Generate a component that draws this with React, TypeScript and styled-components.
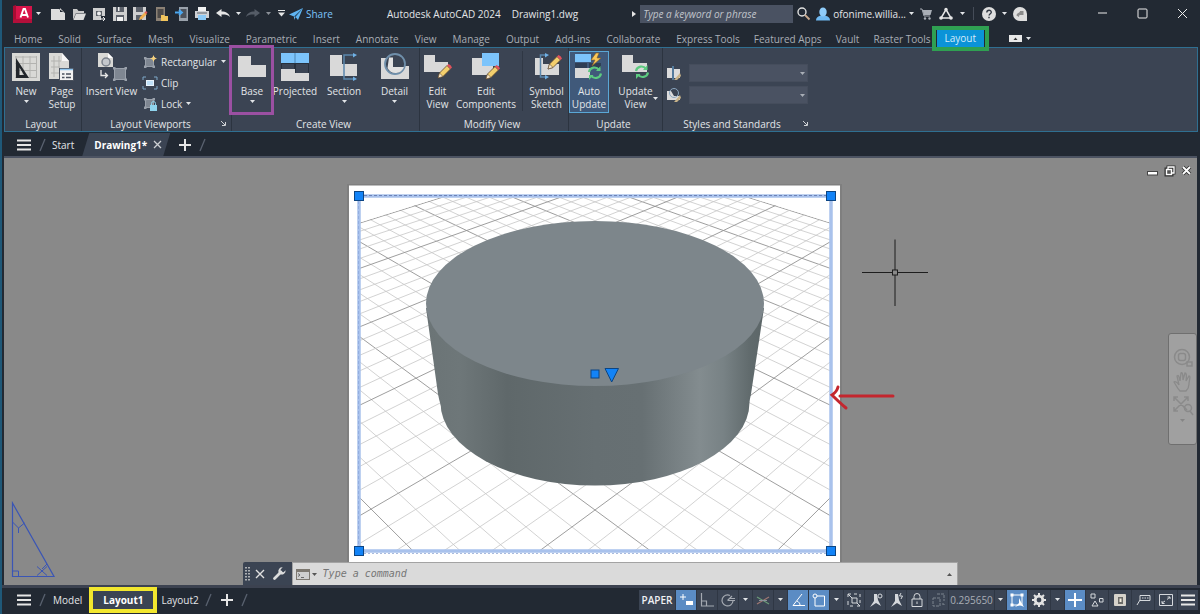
import React from "react";
import styled, { createGlobalStyle, css } from "styled-components";

const c = {
  chrome: "#222933",
  panel: "#3b4453",
  field: "#4a5262",
  line: "#2f6f91",
  text: "#e2e5e8",
  muted: "#a9aeb6",
  icon: "#dcdcdc",
  sky: "#7cc4fb",
  active: "#5b8cc4",
};

const Global = createGlobalStyle`
  *, *::before, *::after { box-sizing: border-box; }
  body { margin: 0; background: ${c.chrome}; }
  body, button, input, select {
    font-family: "Open Sans", "Noto Sans", "Segoe UI", sans-serif;
    font-size: 10px;
    line-height: 14px;
  }
  button { margin: 0; padding: 0; border: 0; background: none; color: inherit; }
  a { color: inherit; text-decoration: none; }
`;

const Window = styled.div`
  display: flex;
  flex-direction: column;
  min-height: 100vh;
  overflow: hidden;
  border-left: 2px solid #1f5878;
  background: ${c.chrome};
  color: ${c.text};
`;

const Svg = styled.svg<{ $w: number; $h?: number }>`
  display: block;
  flex: none;
  width: ${(p) => p.$w}px;
  height: ${(p) => p.$h ?? p.$w}px;
  overflow: visible;
`;

/* ---------- small shared glyphs ---------- */

const Caret = ({ color = c.text }: { color?: string }) => (
  <Svg $w={5} $h={3} viewBox="0 0 5 3" aria-hidden="true">
    <path d="M0 0h5L2.500 3z" fill={color} />
  </Svg>
);

const Burger = () => (
  <Svg $w={14} $h={12} viewBox="0 0 14 12" aria-hidden="true">
    <path d="M0 1.500h14M0 6h14M0 10.500h14" stroke="#e6e6e6" strokeWidth="2" />
  </Svg>
);

const Plus = () => (
  <Svg $w={12} viewBox="0 0 12 12" aria-hidden="true">
    <path d="M6 0v12M0 6h12" stroke="#e6e6e6" strokeWidth="2" />
  </Svg>
);

const Slash = () => (
  <Svg $w={5} $h={12} viewBox="0 0 5 12" aria-hidden="true">
    <path d="M0 12L5 0" stroke="#59616f" strokeWidth="1.300" />
  </Svg>
);

/* ---------- title bar ---------- */

const TitleBar = styled.header`
  display: flex;
  align-items: center;
  height: 27px;
  padding: 0 12px 0 11px;
`;

const AppButton = styled.button`
  display: flex;
  align-items: center;
  gap: 3px;
  width: 35px;
`;

const QuickAccess = styled.div`
  display: grid;
  grid-template-columns: repeat(9, 1fr);
  justify-items: center;
  width: 185px;
`;

const IconButton = styled.button<{ $w?: number }>`
  display: flex;
  align-items: center;
  justify-content: center;
  width: ${(p) => (p.$w ? `${p.$w}px` : "auto")};
  flex: none;
`;

const ShareLink = styled.a`
  display: flex;
  align-items: center;
  gap: 3px;
  color: ${c.sky};
`;

const Title = styled.h1`
  display: flex;
  flex: 1;
  justify-content: center;
  gap: 11px;
  margin: 0;
  font-size: 10px;
  font-weight: 400;
  line-height: 14px;
  white-space: nowrap;
`;

const SearchInput = styled.input`
  width: 153px;
  height: 18px;
  margin-left: 4px;
  padding: 0 3px;
  border: 0;
  border-radius: 0;
  background: ${c.field};
  color: ${c.text};
  &::placeholder {
    color: #c0c4ca;
    font-style: italic;
    opacity: 1;
  }
`;

const Account = styled.button`
  display: flex;
  align-items: center;
  gap: 3px;
  margin-left: 3px;
  white-space: nowrap;
`;

const AccountTools = styled.div`
  display: flex;
  align-items: center;
  gap: 6px;
  margin-left: 6px;
`;

const Rule = styled.span`
  width: 1px;
  height: 13px;
  margin: 0 2px;
  background: #454c58;
`;

const WindowControls = styled.div`
  display: flex;
  align-items: center;
  gap: 29px;
  margin-left: 70px;
`;

const Logo = () => (
  <Svg $w={20} $h={18} viewBox="0 0 20 18" aria-hidden="true">
    <path d="M0 1h19v17H0z" fill="#d8144a" />
    <path d="M0 1l3-1v17l-3 1z" fill="#a80c33" />
    <path d="M0 15l3-1h16v4H0z" fill="#b30f3a" />
    <path d="M7.500 12.500L10.500 4h1.500l3 8.500M8.600 10h5.400" fill="none" stroke="#fff" strokeWidth="1.900" />
  </Svg>
);

const quick: Record<string, React.ReactNode> = {
  New: <path d="M0 2h8l6 4v7H0zM9 1v4h4z" fill={c.icon} />,
  Open: (
    <>
      <path d="M1 13V2h4l1.500 2H12v2H4z" fill="#c9c9c9" />
      <path d="M4 6.500h10L11.500 13H1.500z" fill={c.icon} />
    </>
  ),
  "Open from Web": (
    <>
      <path d="M1 1h12v8H9v4H1z" fill="#cfcfcf" />
      <path d="M4 4h6v5H4z" fill="#5a5f66" />
      <circle cx="7" cy="6.500" r="2" fill="#eee" />
      <path d="M8 12h5M11 10l2 2-2 2" stroke="#eee" fill="none" />
    </>
  ),
  Save: (
    <>
      <path d="M0 0h14v14H0z" fill="#cfcfcf" />
      <path d="M3 0h8v5H3zM3 8h8v6H3z" fill="#5b6069" />
      <path d="M5 0h1.500v4H5zM4 10h6v4H4z" fill="#f2f2f2" />
    </>
  ),
  "Save As": (
    <>
      <path d="M0 0h13v13H0z" fill="#cfcfcf" />
      <path d="M3 0h7v5H3zM3 8h6v5H3z" fill="#5b6069" />
      <path d="M6 13l1-3 5-5 2 2-5 5z" fill="#f0b050" />
      <path d="M11.500 5.500L13 4l1.500 1.500L13 7z" fill="#e25b5b" />
    </>
  ),
  "Open from Mobile": (
    <>
      <path d="M2 0h9v14H2z" fill="#8b8175" />
      <path d="M3.500 2h6v9h-6z" fill="#4d4a48" />
      <path d="M7 8h3l1 1h3v5H7z" fill="#f2c55c" />
    </>
  ),
  "Save to Mobile": (
    <>
      <path d="M4 0h9v14H4z" fill="#9aa2ab" />
      <path d="M5.500 2h6v9h-6z" fill="#4d535c" />
      <path d="M0 5.500h6M4 3l3 2.500L4 8" fill="none" stroke="#4ba8f0" strokeWidth="1.800" />
    </>
  ),
  Plot: (
    <>
      <path d="M3 0h8v4H3z" fill="#f2f2f2" />
      <path d="M0 4h14v7H0z" fill="#cfd2d6" />
      <path d="M3 8h8v5H3z" fill="#8ccaf7" />
      <path d="M2 6h10" stroke="#5b6069" />
    </>
  ),
  Undo: (
    <path d="M0 6l5.500-4v2.600C10 4.600 13 6.500 14 10c-2-2.200-4.500-2.600-8.500-2.500V10z" fill="#e6e6e6" />
  ),
};

const TitleSection = () => (
  <TitleBar>
    <AppButton type="button" aria-label="Application menu">
      <Logo />
      <Caret />
    </AppButton>
    <QuickAccess>
      {Object.entries(quick).map(([name, glyph]) => (
        <IconButton type="button" key={name} aria-label={name}>
          <Svg $w={14} viewBox="0 0 14 14" aria-hidden="true">
            {glyph}
          </Svg>
        </IconButton>
      ))}
    </QuickAccess>
    <IconButton type="button" $w={10} aria-label="Undo history">
      <Caret />
    </IconButton>
    <IconButton type="button" $w={20} aria-label="Redo">
      <Svg $w={14} viewBox="0 0 14 14" aria-hidden="true">
        <path d="M14 6L8.500 2v2.600C4 4.600 1 6.500 0 10c2-2.200 4.500-2.600 8.500-2.500V10z" fill="#555c67" />
      </Svg>
    </IconButton>
    <IconButton type="button" $w={10} aria-label="Redo history">
      <Caret color="#8b9098" />
    </IconButton>
    <IconButton type="button" $w={16} aria-label="Customize Quick Access Toolbar">
      <Svg $w={7} $h={7} viewBox="0 0 7 7" aria-hidden="true">
        <path d="M0 .5h7" stroke="#e6e6e6" />
        <path d="M0 2.500h7L3.500 6.500z" fill="#e6e6e6" />
      </Svg>
    </IconButton>
    <ShareLink href="#share">
      <Svg $w={14} viewBox="0 0 14 14" aria-hidden="true">
        <path d="M0 7.500L14 1 9 13 6.500 10 5 13V9.500z" fill="#5fb4f2" />
        <path d="M5 9.500L14 1 6.500 10z" fill="#2a4a66" />
      </Svg>
      Share
    </ShareLink>
    <Title>
      <span>Autodesk AutoCAD 2024</span>
      <span>Drawing1.dwg</span>
    </Title>
    <Svg $w={4} $h={6} viewBox="0 0 4 6" aria-hidden="true">
      <path d="M0 0l4 3-4 3z" fill="#e6e6e6" />
    </Svg>
    <SearchInput aria-label="Search" placeholder="Type a keyword or phrase" />
    <IconButton type="button" $w={20} aria-label="Run search">
      <Svg $w={13} viewBox="0 0 13 13" aria-hidden="true">
        <circle cx="5" cy="5" r="4" fill="none" stroke="#e0e0e0" strokeWidth="1.400" />
        <path d="M8 8l4.500 4.500" stroke="#c9a98d" strokeWidth="1.800" />
      </Svg>
    </IconButton>
    <Account type="button">
      <Svg $w={14} viewBox="0 0 14 14" aria-hidden="true">
        <path d="M0 13.500c0-3 2-4 4.500-4.700h5C12 9.500 14 10.500 14 13.500z" fill="#6fb9f2" />
        <ellipse cx="7" cy="5" rx="3.700" ry="4.600" fill="#8fccfa" />
      </Svg>
      ofonime.willia...
      <Caret />
    </Account>
    <AccountTools>
      <IconButton type="button" aria-label="App Store">
        <Svg $w={12} viewBox="0 0 12 12" aria-hidden="true">
          <path d="M0 1h2l2 7h6" fill="none" stroke={c.muted} />
          <path d="M2.500 2H12l-1.500 5H4z" fill={c.muted} />
          <circle cx="5" cy="10.500" r="1.200" fill={c.muted} />
          <circle cx="9.500" cy="10.500" r="1.200" fill={c.muted} />
        </Svg>
      </IconButton>
      <IconButton type="button" $w={16} aria-label="Autodesk App">
        <Svg $w={14} viewBox="0 0 14 14" aria-hidden="true">
          <path d="M7 2.500L12 11H2z" fill="none" stroke="#e6e6e6" strokeWidth="1.500" />
          <circle cx="7" cy="2.500" r="1.700" fill="#e6e6e6" />
          <circle cx="12" cy="11" r="1.800" fill="#e6e6e6" />
          <circle cx="2" cy="11" r="1.800" fill="#e6e6e6" />
        </Svg>
      </IconButton>
      <Caret />
      <Rule />
      <IconButton type="button" aria-label="Help">
        <Svg $w={14} viewBox="0 0 14 14" aria-hidden="true">
          <circle cx="7" cy="7" r="7" fill="#dedede" />
          <path d="M4.800 5.500c0-3 4.500-3 4.500-.3 0 1.600-2.200 1.600-2.200 3.400M7 9.800v1.500" fill="none" stroke="#333a45" strokeWidth="1.400" />
        </Svg>
      </IconButton>
      <Caret />
      <IconButton type="button" aria-label="Assistant">
        <Svg $w={14} viewBox="0 0 14 14" aria-hidden="true">
          <path d="M7 0a7 7 0 0 1 7 7v7H7A7 7 0 0 1 7 0z" fill="#dedede" />
          <path d="M3.500 8.500c0-2.500 3.500-2.500 3.500-4.500h3.500v4H7c-1 0-1 1.500-1 2z" fill="#8b8b8b" />
        </Svg>
      </IconButton>
    </AccountTools>
    <WindowControls>
      <IconButton type="button" aria-label="Minimize">
        <Svg $w={11} viewBox="0 0 11 11" aria-hidden="true">
          <path d="M1 5h9" stroke="#ececec" />
        </Svg>
      </IconButton>
      <IconButton type="button" aria-label="Maximize">
        <Svg $w={11} viewBox="0 0 11 11" aria-hidden="true">
          <rect x="1" y="1" width="9" height="9" rx="1" fill="none" stroke="#ececec" />
        </Svg>
      </IconButton>
      <IconButton type="button" aria-label="Close">
        <Svg $w={11} viewBox="0 0 11 11" aria-hidden="true">
          <path d="M1 1l9 9M10 1l-9 9" stroke="#ececec" />
        </Svg>
      </IconButton>
    </WindowControls>
  </TitleBar>
);

/* ---------- ribbon tabs ---------- */

const TabStrip = styled.nav`
  display: flex;
  align-items: center;
  gap: 16px;
  height: 20px;
  padding: 3px 0 0 12px;
  color: ${c.muted};
  white-space: nowrap;
`;

const AddOnTabs = styled.div`
  display: flex;
  align-items: center;
  gap: 14px;
`;

const RibbonTab = styled.a<{ $active?: boolean }>`
  position: relative;
  ${(p) =>
    p.$active &&
    css`
      height: 17px;
      margin: 0 -8px;
      padding: 1px 8px 0;
      background: #0b93d8;
      color: #d6ecfa;
    `}
`;

const Marker = styled.span<{ $color: string; $inset: string; $w?: number }>`
  position: absolute;
  z-index: 2;
  inset: ${(p) => p.$inset};
  border: ${(p) => p.$w ?? 4}px solid ${(p) => p.$color};
  pointer-events: none;
`;

const RibbonToggle = styled.button`
  display: flex;
  align-items: center;
  gap: 4px;
  margin-left: 19px;
`;

const tabs = [
  "Home", "Solid", "Surface", "Mesh", "Visualize", "Parametric", "Insert", "Annotate", "View",
  "Manage", "Output", "Add-ins", "Collaborate",
];

const addOnTabs = ["Express Tools", "Featured Apps", "Vault", "Raster Tools"];

const Tabs = () => (
  <TabStrip>
    {tabs.map((t) => (
      <RibbonTab key={t} href="#ribbon">
        {t}
      </RibbonTab>
    ))}
    <AddOnTabs>
      {addOnTabs.map((t) => (
        <RibbonTab key={t} href="#ribbon">
          {t}
        </RibbonTab>
      ))}
      <RibbonTab href="#ribbon" $active>
        Layout
        <Marker $color="#2fa052" $inset="-4px -5px" />
      </RibbonTab>
      <RibbonToggle type="button" aria-label="Minimize ribbon">
        <Svg $w={13} $h={7} viewBox="0 0 13 7" aria-hidden="true">
          <rect width="13" height="7" fill="#e8e8e8" />
          <path d="M4.500 5l2-2.500 2 2.500z" fill="#333" />
        </Svg>
        <Caret />
      </RibbonToggle>
    </AddOnTabs>
  </TabStrip>
);

/* ---------- ribbon ---------- */

const RibbonBar = styled.section`
  display: flex;
  height: 85px;
  margin: 0 2px;
  border: 1px solid ${c.line};
  background: ${c.panel};
`;

const PanelBox = styled.div<{ $last?: boolean }>`
  display: flex;
  flex-direction: column;
  flex: none;
  border-right: ${(p) => (p.$last ? 0 : 1)}px solid #2c3440;
`;

const PanelBody = styled.div`
  display: flex;
  align-items: flex-start;
  flex: 1;
  padding-top: 3px;
`;

const PanelFoot = styled.div`
  display: flex;
  align-items: center;
  height: 15px;
  padding-right: 4px;
`;

const PanelName = styled.span`
  flex: 1;
  text-align: center;
`;

const Launcher = () => (
  <IconButton type="button" $w={8} aria-label="Panel settings">
    <Svg $w={5} viewBox="0 0 5 5" aria-hidden="true">
      <path d="M0 0l4 4M4.500 1v3.500H1" fill="none" stroke="#cfd2d6" />
    </Svg>
  </IconButton>
);

const Tool = styled.button<{ $w: number; $active?: boolean }>`
  position: relative;
  display: flex;
  flex-direction: column;
  align-items: center;
  flex: none;
  width: ${(p) => p.$w}px;
  height: 62px;
  padding-top: 1px;
  border: 1px solid ${(p) => (p.$active ? "#5aa7d6" : "transparent")};
  background: ${(p) => (p.$active ? "#40597a" : "transparent")};
  line-height: 13px;
  white-space: nowrap;
`;

const ToolText = styled.span`
  margin: 4px 0 2px;
`;

const SideCaret = styled.span`
  position: absolute;
  right: 3px;
  bottom: 12px;
`;

const ToolColumn = styled.div`
  display: flex;
  flex-direction: column;
  width: 90px;
  padding: 0 6px 0 2px;
`;

const ToolRow = styled.div`
  display: flex;
  align-items: center;
  height: 21px;
`;

const ToolRowButton = styled.button<{ $wide?: boolean }>`
  display: flex;
  align-items: center;
  justify-content: space-between;
  flex: ${(p) => (p.$wide ? 1 : "none")};
  gap: 4px;
`;

const ToolDivider = styled.span`
  width: 1px;
  height: 60px;
  margin: 0 2px 0 5px;
  background: #2f3744;
`;

const StyleRows = styled.div`
  display: grid;
  grid-template-columns: 14px 119px;
  gap: 4px 8px;
  align-items: center;
  padding: 13px 5px 0 4px;
`;

const SelectWrap = styled.label`
  position: relative;
  display: block;
  height: 18px;
`;

const StyleSelect = styled.select`
  display: block;
  width: 100%;
  height: 18px;
  border: 1px solid #454d5c;
  border-radius: 0;
  background: ${c.field};
  color: ${c.text};
  appearance: none;
`;

const SelectCaret = styled.span`
  position: absolute;
  top: 8px;
  right: 3px;
  pointer-events: none;
`;

const Pencil = ({ x, y }: { x: number; y: number }) => (
  <g transform={`translate(${x} ${y})`}>
    <path d="M0 14l1.500-5L9 1.500l3.500 3.500L5 12.500z" fill="#f3cf6d" stroke="#5b4630" strokeWidth=".8" />
    <path d="M0 14l1.500-5L5 12.500z" fill="#fbe9c8" stroke="#5b4630" strokeWidth=".6" />
    <path d="M9 1.500L10.500 0Q13 .5 14 3.500L12.500 5z" fill="#e0525c" />
  </g>
);

const Refresh = ({ x, y }: { x: number; y: number }) => (
  <g transform={`translate(${x} ${y})`} fill="none" stroke="#5ccb80" strokeWidth="2.200">
    <path d="M1 6a5.500 5.500 0 0 1 10-2M13 7.500a5.500 5.500 0 0 1-10 2" />
    <path d="M12.500 0v5H8zM1 14V9h4.500z" fill="#5ccb80" stroke="none" />
  </g>
);

const VpBox = ({ x, y, s }: { x: number; y: number; s: number }) => (
  <g transform={`translate(${x} ${y})`} stroke="#9aa1ab" fill="#9aa1ab">
    <rect x="1.500" y="1.500" width={s - 3} height={s - 3} fill="#7f8792" />
    <path d={`M0 0h2.500v2.500H0zM${s - 2.500} 0h2.500v2.500h-2.500zM0 ${s - 2.500}h2.500v2.500H0zM${s - 2.500} ${s - 2.500}h2.500v2.500h-2.500z`} stroke="none" />
  </g>
);

const art: Record<string, React.ReactNode> = {
  new: (
    <>
      <rect width="28" height="28" fill="#d9d9d6" />
      <path d="M3 4h22M3 10.500h22M3 17.500h22M3 24.500h22M4 3v22M11 3v22M18 3v22M24.500 3v22" stroke="#b3b3b0" />
      <path d="M4 5v20h13zM7.500 14.500l4.500 7.500H7.500z" fill="#22262b" fillRule="evenodd" />
    </>
  ),
  page: (
    <>
      <path d="M1 0h13l7 8v18H1z" fill="#d9d9d6" />
      <path d="M14 0v8h7z" fill="#f7f7f7" />
      <path d="M3 8h10M3 14h9M3 20h8M6 3v21M11 3v12" stroke="#b3b3b0" />
      <rect x="11.500" y="15.500" width="14" height="12" fill="#f2f2f2" stroke="#4b525e" />
      <path d="M12 16.500h13" stroke="#8fc5ee" strokeWidth="1.500" />
      <path d="M14 21h2.500M14 24.500h2.500M18 21h5M18 24.500h5" stroke="#4b525e" strokeWidth="1.500" />
    </>
  ),
  insert: (
    <>
      <path d="M0 0h10l5 5v9H0z" fill="#d9d9d6" />
      <path d="M10 0v5h5z" fill="#fff" />
      <circle cx="8" cy="9" r="4" fill="#c3c7cc" stroke="#7b828c" strokeWidth="1.500" />
      <path d="M3 17v5.500h6M7 20l2.500 2.500L7 25" fill="none" stroke="#e6e6e6" strokeWidth="1.300" />
      <VpBox x={15} y={14} s={14} />
    </>
  ),
  base: <path d="M0 3h13v9h15v12H0z" fill="#d9d9d9" />,
  projected: (
    <>
      <path d="M0 0h28v10H0z" fill="#7cc4fb" />
      <path d="M14 0v10" stroke="#4a86b5" />
      <path d="M.5 10.500h13v6H.5zM14.500 10.500h13v10h-13z" fill={c.panel} stroke="#27303c" />
      <path d="M0 16h14v4h14v8H0z" fill="#d9d9d9" />
    </>
  ),
  section: (
    <>
      <path d="M0 2h12v9h15v12H0z" fill="#d9d9d9" />
      <path d="M25 2H14v24h11" fill="none" stroke="#5b87ad" strokeWidth="1.500" />
      <path d="M23 0l4 2-4 2.500zM23 23.500l4 2.500-4 2z" fill="#6fb1e6" />
    </>
  ),
  detail: (
    <>
      <path d="M0 5h8v8h20v13H0z" fill="#d9d9d9" />
      <circle cx="14" cy="11" r="10" fill="#3b4453" stroke="#6f8faa" strokeWidth="1.800" />
      <path d="M8 4.500h4V14h11A9 9 0 0 1 6.500 15z" fill="#e2e2e2" />
    </>
  ),
  editView: (
    <>
      <path d="M0 2h11v7h13v4l-6 6H0z" fill="#d9d9d9" />
      <Pencil x={14} y={11} />
    </>
  ),
  editComp: (
    <>
      <path d="M0 5h13v8h8v9H0z" fill="#d9d9d9" />
      <rect x="10" y="0" width="17" height="13" fill="#7cc4fb" />
      <Pencil x={14} y={12} />
    </>
  ),
  symbol: (
    <>
      <path d="M2 5h8v6h16v11H2z" fill="#d9d9d9" />
      <path d="M13 2H7.500v22H13" fill="none" stroke="#5b87ad" strokeWidth="1.500" />
      <path d="M12 0l4 2-4 2.500zM12 22l4 2-4 2.500z" fill="#6fb1e6" />
      <Pencil x={15} y={2} />
    </>
  ),
  auto: (
    <>
      <path d="M0 1h16v8H0z" fill="#7cc4fb" />
      <path d="M0 10h12v5H0zM14 10h12v5H14z" fill="#2f3e54" />
      <path d="M0 15h15v10H0z" fill="#d9d9d9" />
      <path d="M21 0l-5 7h4l-3 6 9-8h-4l2-5z" fill="#fbc95a" stroke="#8a6120" strokeWidth=".6" />
      <Refresh x={13} y={13} />
    </>
  ),
  update: (
    <>
      <path d="M0 2h11v8h14v9H0z" fill="#d9d9d9" />
      <Refresh x={13} y={12} />
    </>
  ),
};

interface ToolProps {
  icon: string;
  lines: string[];
  w: number;
  menu?: boolean;
  sideMenu?: boolean;
  active?: boolean;
  children?: React.ReactNode;
}

const BigTool = ({ icon, lines, w, menu, sideMenu, active, children }: ToolProps) => (
  <Tool type="button" $w={w} $active={active}>
    <Svg $w={28} viewBox="0 0 28 28" aria-hidden="true">
      {art[icon]}
    </Svg>
    <ToolText>
      {lines.map((l, i) => (
        <React.Fragment key={l}>
          {i > 0 && <br />}
          {l}
        </React.Fragment>
      ))}
    </ToolText>
    {menu && <Caret />}
    {sideMenu && (
      <SideCaret>
        <Caret />
      </SideCaret>
    )}
    {children}
  </Tool>
);

interface PanelProps {
  name: string;
  launcher?: boolean;
  last?: boolean;
  children: React.ReactNode;
}

const Panel = ({ name, launcher, last, children }: PanelProps) => (
  <PanelBox $last={last}>
    <PanelBody>{children}</PanelBody>
    <PanelFoot>
      <PanelName>{name}</PanelName>
      {launcher && <Launcher />}
    </PanelFoot>
  </PanelBox>
);

const FirstTools = styled.div`
  display: flex;
  padding: 0 1px 0 3px;
`;

const Ribbon = () => (
  <RibbonBar id="ribbon">
    <Panel name="Layout">
      <FirstTools>
        <BigTool icon="new" lines={["New"]} w={36} menu />
        <BigTool icon="page" lines={["Page", "Setup"]} w={36} />
      </FirstTools>
    </Panel>
    <Panel name="Layout Viewports" launcher>
      <BigTool icon="insert" lines={["Insert View"]} w={59} />
      <ToolColumn>
        <ToolRow>
          <ToolRowButton type="button" $wide>
            <Svg $w={14} viewBox="0 0 14 14" aria-hidden="true">
              <VpBox x={1} y={2} s={11} />
              <path d="M10.500 0l1 2.500L14 3.500l-2.500 1-1 2.500-1-2.500L7 3.500l2.500-1z" fill="#f8d27a" />
            </Svg>
            Rectangular
            <Caret />
          </ToolRowButton>
        </ToolRow>
        <ToolRow>
          <ToolRowButton type="button">
            <Svg $w={14} viewBox="0 0 14 14" aria-hidden="true">
              <path d="M0 4V1h3M11 1h3v3M14 10v3h-3M3 13H0v-3" fill="none" stroke="#7fa8c9" />
              <rect x="3.500" y="4.500" width="7" height="5" fill="#bfe0f8" stroke="#e8f3fb" />
            </Svg>
            Clip
          </ToolRowButton>
        </ToolRow>
        <ToolRow>
          <ToolRowButton type="button">
            <Svg $w={14} viewBox="0 0 14 14" aria-hidden="true">
              <VpBox x={1} y={1} s={11} />
              <rect x="7" y="8" width="7" height="6" fill="#8fd4ee" />
              <path d="M8.500 8V6.500a2 2 0 0 1 4 0V8" fill="none" stroke="#8fd4ee" />
            </Svg>
            Lock
            <Caret />
          </ToolRowButton>
        </ToolRow>
      </ToolColumn>
    </Panel>
    <Panel name="Create View">
      <BigTool icon="base" lines={["Base"]} w={40} menu>
        <Marker $color="#9b50a2" $w={3} $inset="-7px -3px -3px -4px" />
      </BigTool>
      <BigTool icon="projected" lines={["Projected"]} w={46} />
      <BigTool icon="section" lines={["Section"]} w={52} menu />
      <BigTool icon="detail" lines={["Detail"]} w={49} menu />
    </Panel>
    <Panel name="Modify View">
      <BigTool icon="editView" lines={["Edit", "View"]} w={35} />
      <BigTool icon="editComp" lines={["Edit", "Components"]} w={62} />
      <ToolDivider />
      <BigTool icon="symbol" lines={["Symbol", "Sketch"]} w={43} />
    </Panel>
    <Panel name="Update">
      <BigTool icon="auto" lines={["Auto", "Update"]} w={40} active />
      <BigTool icon="update" lines={["Update", "View"]} w={53} sideMenu />
    </Panel>
    <Panel name="Styles and Standards" launcher last>
      <StyleRows>
        <Svg $w={14} viewBox="0 0 14 14" aria-hidden="true">
          <path d="M0 2h5v10H0zM7 3h6v9H7z" fill={c.icon} />
          <path d="M6 0v14" stroke="#6fb1e6" />
          <path d="M7 14l6-7 1 3-4 4z" fill="#c9b48a" />
        </Svg>
        <SelectWrap>
          <StyleSelect aria-label="Section view style" />
          <SelectCaret>
            <Caret color={c.muted} />
          </SelectCaret>
        </SelectWrap>
        <Svg $w={14} viewBox="0 0 14 14" aria-hidden="true">
          <path d="M0 3h4l3 5h6v4H0z" fill={c.icon} />
          <circle cx="7" cy="5" r="4.500" fill="none" stroke="#8aa6bf" />
          <path d="M7 14l6-7 1 3-4 4z" fill="#c9b48a" />
        </Svg>
        <SelectWrap>
          <StyleSelect aria-label="Detail view style" />
          <SelectCaret>
            <Caret color={c.muted} />
          </SelectCaret>
        </SelectWrap>
      </StyleRows>
    </Panel>
  </RibbonBar>
);

/* ---------- document tabs ---------- */

const DocTabs = styled.nav`
  display: flex;
  align-items: center;
  height: 24px;
  padding: 1px 0 0 15px;
`;

const DocLink = styled.a`
  margin: 0 6px 0 7px;
`;

const ActiveDoc = styled.div`
  display: flex;
  align-items: center;
  gap: 7px;
  height: 23px;
  margin-left: 2px;
  padding: 0 9px 0 12px;
  background: ${c.panel};
  clip-path: polygon(7px 0, 100% 0, calc(100% - 7px) 100%, 0 100%);
  color: #fff;
  font-weight: 700;
`;

const Spaced = styled.span<{ $l: number; $r: number }>`
  display: flex;
  align-items: center;
  margin: 0 ${(p) => p.$r}px 0 ${(p) => p.$l}px;
`;

const Documents = () => (
  <DocTabs aria-label="Documents">
    <IconButton type="button" aria-label="File menu">
      <Burger />
    </IconButton>
    <Spaced $l={9} $r={0}>
      <Slash />
    </Spaced>
    <DocLink href="#start">Start</DocLink>
    <ActiveDoc>
      Drawing1*
      <IconButton type="button" aria-label="Close drawing">
        <Svg $w={7} viewBox="0 0 7 7" aria-hidden="true">
          <path d="M0 0l7 7M7 0L0 7" stroke="#cdd0d4" strokeWidth="1.300" />
        </Svg>
      </IconButton>
    </ActiveDoc>
    <Spaced $l={9} $r={9}>
      <IconButton type="button" aria-label="New drawing">
        <Plus />
      </IconButton>
    </Spaced>
    <Slash />
  </DocTabs>
);

/* ---------- drawing canvas ---------- */

const Canvas = styled.main`
  position: relative;
  display: flex;
  flex: 1;
  justify-content: center;
  min-height: 400px;
  margin: 0 3px 0 2px;
  padding: 27px 12px 0 0;
  border-top: 2px solid #4c5362;
  overflow: hidden;
  background: #898989;
`;

const Sheet = styled.svg`
  display: block;
  flex: none;
  width: 491px;
  height: 390px;
  margin-bottom: -30px;
  overflow: visible;
`;

/* Perspective grid: lines fan out from a vanishing point; every fifth is a major line. */
const VP = { x: -255, y: -116 };
const gridLines = Array.from({ length: 33 }, (_, i) => {
  const k = i / 5;
  const y = (15.03 * k + 223) / (1 - 0.1127 * k);
  return { y, major: i % 5 === 0 };
});

const GridFan = () => (
  <>
    {gridLines.map((l) => (
      <line
        key={l.y}
        x1={VP.x}
        y1={VP.y}
        x2={830}
        y2={l.y}
        stroke={l.major ? "#939393" : "#c6c6c6"}
        strokeWidth={l.major ? 0.9 : 0.8}
      />
    ))}
  </>
);

const Grip = ({ x, y, s = 9 }: { x: number; y: number; s?: number }) => (
  <rect x={x - s / 2} y={y - s / 2} width={s} height={s} fill="#1283f7" stroke="#0c4583" />
);

const Drawing = () => (
  <Sheet viewBox="349 185 491 390" role="img" aria-label="Cylinder in a layout viewport">
    <defs>
      <clipPath id="viewport">
        <path d="M360 550V222.500L440 197.500H750L830 222.500V550z" />
      </clipPath>
      <linearGradient id="side" gradientUnits="userSpaceOnUse" x1="426" y1="0" x2="764" y2="0">
        <stop offset="0" stopColor="#6b7476" />
        <stop offset=".1" stopColor="#6e7779" />
        <stop offset=".24" stopColor="#5f686a" />
        <stop offset=".5" stopColor="#666f72" />
        <stop offset=".64" stopColor="#677073" />
        <stop offset=".81" stopColor="#838c8f" />
        <stop offset=".88" stopColor="#788285" />
        <stop offset=".96" stopColor="#606a6c" />
        <stop offset="1" stopColor="#5c6668" />
      </linearGradient>
    </defs>
    <rect x="347" y="184" width="495" height="400" fill="#7f7f7f" />
    <rect x="349" y="185.500" width="491" height="400" fill="#fff" />
    <g clipPath="url(#viewport)">
      <GridFan />
      <g transform="translate(1190 0) scale(-1 1)">
        <GridFan />
      </g>
    </g>
    <path d="M426 308L438 394Q439 400 441 406A154.500 83 0 0 0 748 406Q750 400 751 394L764 308z" fill="url(#side)" />
    <ellipse cx="595" cy="402.500" rx="154.500" ry="83" fill="url(#side)" />
    <ellipse cx="595" cy="303.500" rx="169" ry="82.500" fill="#7d868b" />
    <rect x="359" y="196" width="472" height="355" fill="none" stroke="#a9c2ec" strokeWidth="3.500" />
    <path d="M364 195.500h462" stroke="#6c83b8" strokeDasharray="3 2" />
    <path d="M364 553.500h462" stroke="#a9bbdf" strokeDasharray="2 2" />
    <path d="M358.500 201v345" stroke="#93aee0" strokeDasharray="3 2" />
    <Grip x={359} y={196} />
    <Grip x={831} y={196} />
    <Grip x={359} y={551} />
    <Grip x={831} y={551} />
    <Grip x={595} y={374} s={8} />
    <path d="M605 368.500h13.500L611.700 382z" fill="#1283f7" stroke="#0c4583" />
    <g fill="none" stroke="#c4262e" strokeWidth="3" strokeLinecap="round">
      <path d="M840 396h53" />
      <path d="M838 387c-1 4-3 6-6 8 4 4 8 8 14 13" />
    </g>
    <g fill="none" stroke="#1d1d1d">
      <path d="M862 272.500h30.500M897.500 272.500H928M895 239.500V270M895 275v31" />
      <rect x="892.500" y="270" width="5" height="5" />
    </g>
  </Sheet>
);

const SheetControls = styled.div`
  position: absolute;
  top: 7px;
  right: 6px;
  display: flex;
  gap: 7px;
`;

const UcsIcon = styled(Svg)`
  position: absolute;
  left: 7px;
  bottom: 8px;
`;

const NavBar = styled.div`
  position: absolute;
  top: 175px;
  right: 0;
  display: flex;
  flex-direction: column;
  align-items: center;
  gap: 3px;
  width: 29px;
  height: 112px;
  padding-top: 14px;
  border: 1px solid #6f6f6f;
  border-radius: 3px;
  background: #a0a0a0;
  color: #8a8a8a;
`;

const CommandBar = styled.form`
  position: absolute;
  left: 20%;
  right: 20%;
  bottom: 0;
  display: flex;
  height: 23px;
`;

const CommandTools = styled.div`
  display: flex;
  align-items: center;
  gap: 6px;
  width: 49px;
  padding-left: 2px;
  background: ${c.panel};
  border-radius: 2px 0 0 0;
`;

const CommandField = styled.label`
  display: flex;
  flex: 1;
  align-items: center;
  padding: 0 5px 0 3px;
  border: 1px solid #a3a3a3;
  border-bottom: 0;
  background: #dadada;
`;

const CommandInput = styled.input`
  flex: 1;
  min-width: 0;
  padding: 0 0 0 6px;
  border: 0;
  background: transparent;
  color: #333;
  font-family: "DejaVu Sans Mono", "Liberation Mono", monospace;
  &::placeholder {
    color: #767676;
    font-style: italic;
    opacity: 1;
  }
`;

const Workspace = () => (
  <Canvas>
    <Drawing />
    <SheetControls>
      <IconButton type="button" aria-label="Minimize drawing">
        <Svg $w={11} viewBox="0 0 11 11" aria-hidden="true">
          <rect x=".5" y="6.500" width="10" height="3.500" fill="#fff" stroke="#444" />
        </Svg>
      </IconButton>
      <IconButton type="button" aria-label="Restore drawing">
        <Svg $w={10} viewBox="0 0 10 10" aria-hidden="true">
          <path d="M3 3V1h6v6H7" fill="none" stroke="#333" strokeWidth="3" />
          <rect x="1" y="3" width="6" height="6" fill="#333" stroke="#333" strokeWidth="3" />
          <path d="M3 3V1h6v6H7" fill="none" stroke="#fff" strokeWidth="1.300" />
          <rect x="1.500" y="3.500" width="5" height="5" fill="#555" stroke="#fff" strokeWidth="1.400" />
        </Svg>
      </IconButton>
      <IconButton type="button" aria-label="Close drawing window">
        <Svg $w={9} viewBox="0 0 9 9" aria-hidden="true">
          <path d="M1 1l7 7M8 1L1 8" stroke="#333" strokeWidth="3.600" />
          <path d="M1 1l7 7M8 1L1 8" stroke="#fff" strokeWidth="1.800" />
        </Svg>
      </IconButton>
    </SheetControls>
    <UcsIcon $w={44} $h={75} viewBox="0 0 44 75" aria-hidden="true">
      <g fill="none" stroke="#3a55b5">
        <path d="M1.500 1v73.500H43z" strokeWidth="1.200" />
        <path d="M1.500 69h6v5.500M1.500 20l6 6 6-5M7.500 26v5M26 64.500l10 9M36 64.500l-10 9M31 67l5-5" />
      </g>
    </UcsIcon>
    <NavBar>
      <Svg $w={20} viewBox="0 0 20 20" aria-hidden="true">
        <g fill="none" stroke="currentColor" strokeWidth="1.500">
          <circle cx="9" cy="9" r="7.500" />
          <rect x="5.500" y="5.500" width="7" height="7" rx="2" />
          <rect x="14" y="14" width="5" height="4" />
        </g>
      </Svg>
      <Svg $w={20} $h={22} viewBox="0 0 20 22" aria-hidden="true">
        <path
          d="M7 20C4 17 3 14 1 11c1-1 3 0 5 3L4 5c1-1 2-1 3 5L8 2c1-1 2 0 2 7l2-7c1 0 2 1 1 8l3-5c2 0 0 5 0 8s-1 5-3 7z"
          fill="none"
          stroke="currentColor"
          strokeWidth="1.300"
        />
      </Svg>
      <Svg $w={20} viewBox="0 0 20 20" aria-hidden="true">
        <g fill="none" stroke="currentColor" strokeWidth="1.500">
          <path d="M1 1l13 13M15 1L1 15M1 5V1h4M11 1h4v4M1 11v4h4" />
          <circle cx="15" cy="12" r="3.500" />
          <path d="M17 15l3 4" />
        </g>
      </Svg>
      <Caret color="#858585" />
    </NavBar>
    <CommandBar>
      <CommandTools>
        <Svg $w={5} $h={14} viewBox="0 0 5 14" aria-hidden="true">
          <path d="M1 0v14M4 0v14" stroke="#d5d5d5" strokeWidth="1.500" strokeDasharray="1.500 1.500" />
        </Svg>
        <IconButton type="button" aria-label="Close command line">
          <Svg $w={8} viewBox="0 0 8 8" aria-hidden="true">
            <path d="M0 0l8 8M8 0L0 8" stroke="#e0e0e0" strokeWidth="1.400" />
          </Svg>
        </IconButton>
        <IconButton type="button" $w={20} aria-label="Customize command line">
          <Svg $w={13} viewBox="0 0 13 13" aria-hidden="true">
            <path d="M1.500 11.500L8 5" stroke="#dcdcdc" strokeWidth="2.800" strokeLinecap="round" />
            <path d="M12.600 3.200L10.500 5.300 8 4.800 7.600 2.400 9.700.3a4 4 0 0 0-4.200 5.200l1.800 1.800A4 4 0 0 0 12.600 3.200z" fill="#dcdcdc" />
          </Svg>
        </IconButton>
      </CommandTools>
      <CommandField>
        <Svg $w={14} $h={11} viewBox="0 0 14 11" aria-hidden="true">
          <rect x=".5" y=".5" width="13" height="10" fill="#cfcfcf" stroke="#7d7870" />
          <path d="M0 2h14" stroke="#7d7870" strokeWidth="2" />
          <path d="M2 4.500l2 1.500-2 1.500M5 8.500h3" fill="none" stroke="#6a6a6a" />
        </Svg>
        <Spaced $l={2} $r={0}>
          <Caret color="#555" />
        </Spaced>
        <CommandInput aria-label="Command" placeholder="Type a command" />
        <Svg $w={5} $h={3} viewBox="0 0 5 3" aria-hidden="true">
          <path d="M0 3h5L2.500 0z" fill="#555" />
        </Svg>
      </CommandField>
    </CommandBar>
  </Canvas>
);

/* ---------- status bar ---------- */

const StatusBar = styled.footer`
  display: flex;
  align-items: center;
  height: 29px;
  padding: 0 2px 3px 15px;
  border-top: 3px solid #3c4250;
`;

const LayoutTab = styled.a<{ $active?: boolean }>`
  position: relative;
  margin-left: ${(p) => (p.$active ? 11 : 8)}px;
  ${(p) =>
    p.$active &&
    css`
      padding: 3px 10px;
      background: ${c.panel};
      color: #fff;
      font-weight: 700;
    `}
`;

const StatusTools = styled.div`
  display: flex;
  align-items: center;
  gap: 1px;
  margin-left: auto;
  background: #2f3744;
`;

const StatusButton = styled.button<{ $w?: number; $active?: boolean }>`
  display: flex;
  align-items: center;
  justify-content: center;
  flex: none;
  width: ${(p) => p.$w ?? 20}px;
  height: 20px;
  background: ${(p) => (p.$active ? c.active : c.panel)};
  color: ${(p) => (p.$active ? "#fff" : "#d5d8dc")};
`;

const SpaceButton = styled(StatusButton)`
  color: #f0f1f3;
  font-weight: 600;
`;

const Scale = styled(StatusButton)`
  color: ${c.muted};
`;

const g = (d: string, extra?: React.ReactNode) => (
  <>
    <path d={d} fill="none" stroke="currentColor" />
    {extra}
  </>
);

interface StatusItem {
  name: string;
  w?: number;
  active?: boolean;
  art?: React.ReactNode;
  caret?: boolean;
}

const statusLeft: StatusItem[] = [
  { name: "Snap", active: true, art: g("M4 1v6M1 4h6", <path d="M7 8h7v4H7z" fill="currentColor" />) },
  { name: "Ortho", art: <path d="M1.500 0v13H14M1.500 8h5v5" fill="none" stroke="#a4a9b1" strokeWidth="1.200" /> },
  { name: "Polar", art: <path d="M12 8A5.500 5.500 0 1 1 9 2.500M6.500 7.500H14M6.500 7.500L11 3M8 5.500h6" fill="none" stroke="#a4a9b1" strokeWidth="1.200" /> },
  { name: "Polar options", w: 13, caret: true },
  {
    name: "Isodraft",
    art: (
      <>
        <path d="M1 4l12 7" stroke="#6b9c78" strokeWidth="1.200" />
        <path d="M1 11l12-7" stroke="#a07872" strokeWidth="1.200" />
        <path d="M3 7.500h8" stroke="#8e939b" />
      </>
    ),
  },
  { name: "Isodraft options", w: 13, caret: true },
  { name: "Object snap tracking", active: true, art: g("M11 1L2 12.500h12M6 8c2 1 3 2.500 3 4") },
  { name: "Object snap", active: true, art: g("M3 3h9.500v10H3z", <circle cx="3" cy="3" r="2" fill={c.active} stroke="currentColor" />) },
  { name: "Object snap options", w: 13, caret: true },
  { name: "Selection cycling", art: g("M1 4V1h3M7 1h3M13 1v3M13 7v3M13 13h-3M6 13H3M1 12V8M1 1l4 4M5 5h5v5H5zM10 10l3 3") },
  { name: "Annotation visibility", art: g("M12 1a2 2 0 1 1 0 4 2 2 0 1 1 0-4", <path d="M6 1l3 0 1 6 3 6-5-3-6 4 4-6z" fill="currentColor" />) },
  { name: "Annotation autoscale", art: g("M12 0l-1.500 3h3L12 6", <path d="M6 1l3 0 1 6 3 6-5-3-6 4 4-6z" fill="currentColor" />) },
  { name: "Viewport lock", art: g("M2 6h10v7.500H2zM4 6V3.500a3 3 0 0 1 6 0V6M7 8.500v2.500") },
  { name: "Viewport scale sync", art: <path d="M2 5h7v8H2zM6 1h7v7M11 11h2v2" fill="none" stroke="#7d848f" strokeDasharray="3 1" /> },
];

const statusRight: StatusItem[] = [
  { name: "Scale options", w: 11, caret: true },
  { name: "Annotation scale", active: true, art: g("M2 2h10v10H2z", <path d="M.5.5h3v3h-3zM10.500.5h3v3h-3zM.5 10.500h3v3h-3zM9 5l2 4 3 5-4-2-5 2 4-4z" fill="currentColor" />) },
  {
    name: "Workspace",
    w: 22,
    art: (
      <>
        <circle cx="7" cy="7" r="3.800" fill="none" stroke="#e2e2e2" strokeWidth="2.800" />
        <path d="M7 0v3M7 11v3M0 7h3M11 7h3M2 2l2.200 2.200M9.800 9.800L12 12M12 2L9.800 4.200M4.200 9.800L2 12" stroke="#e2e2e2" strokeWidth="2" />
      </>
    ),
  },
  { name: "Workspace options", w: 13, caret: true },
  { name: "Annotation monitor", active: true, art: <path d="M7 0v14M0 7h14" stroke="#fff" strokeWidth="2" /> },
  { name: "Isolate objects", w: 22, art: g("M1 1h4v4H1zM9.500 5.500h3.500v3.500H9.500zM2 13l3-5 3 5z") },
  {
    name: "Graphics performance",
    w: 22,
    art: (
      <>
        <rect x="1" y="1" width="12" height="12" rx="1" fill="#d5d2cb" />
        <path d="M5 4h5v7H5z" fill="#6b6b68" />
        <path d="M6.500 5.500h2V9h-2z" fill="#f5efe0" />
      </>
    ),
  },
  { name: "Quick properties", w: 22, art: g("M4 2.500h10v5H4zM1 12l3-5M6 5h1.500M8.500 5H10M11 5h1.500") },
  { name: "Clean screen", w: 22, art: g("M.5 1.500h13v11H.5zM8 6.500l3-2.500M11 6V4H8.500M6 8l-3 2M3 8v2.500h2.500") },
];

const StatusItems = ({ items }: { items: StatusItem[] }) => (
  <>
    {items.map((s) => (
      <StatusButton type="button" key={s.name} aria-label={s.name} $w={s.w} $active={s.active}>
        {s.caret ? (
          <Caret />
        ) : (
          <Svg $w={14} viewBox="0 0 14 14" aria-hidden="true">
            {s.art}
          </Svg>
        )}
      </StatusButton>
    ))}
  </>
);

const Status = () => (
  <StatusBar>
    <IconButton type="button" aria-label="Layout menu">
      <Burger />
    </IconButton>
    <Spaced $l={9} $r={0}>
      <Slash />
    </Spaced>
    <LayoutTab href="#model">Model</LayoutTab>
    <LayoutTab href="#layout1" $active>
      Layout1
      <Marker $color="#f2e72e" $inset="-3px -4px" />
    </LayoutTab>
    <LayoutTab href="#layout2">Layout2</LayoutTab>
    <Spaced $l={7} $r={10}>
      <Slash />
    </Spaced>
    <IconButton type="button" aria-label="New layout">
      <Plus />
    </IconButton>
    <Spaced $l={9} $r={0}>
      <Slash />
    </Spaced>
    <StatusTools>
      <SpaceButton type="button" $w={36}>
        PAPER
      </SpaceButton>
      <StatusItems items={statusLeft} />
      <Scale type="button" $w={45}>
        0.295650
      </Scale>
      <StatusItems items={statusRight} />
      <StatusButton type="button" aria-label="Customization">
        <Burger />
      </StatusButton>
    </StatusTools>
  </StatusBar>
);

export default function App() {
  return (
    <>
      <Global />
      <Window>
        <TitleSection />
        <Tabs />
        <Ribbon />
        <Documents />
        <Workspace />
        <Status />
      </Window>
    </>
  );
}
